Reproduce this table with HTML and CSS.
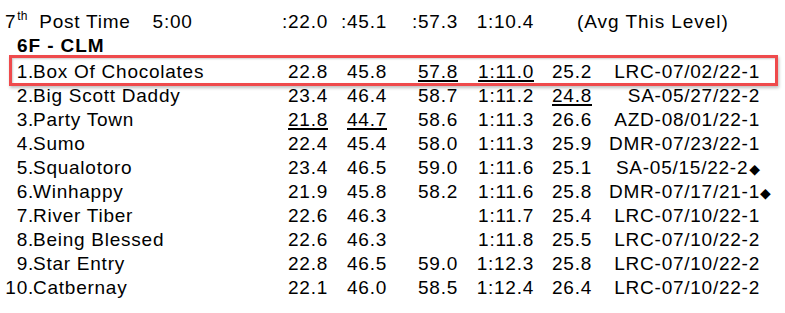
FILE: index.html
```html
<!DOCTYPE html>
<html>
<head>
<meta charset="utf-8">
<link rel="stylesheet" href="styles.css">
</head>
<body>
<div class="sheet">
  <div class="row head">
    <div class="title"><span class="ord">7<sup>th</sup></span><span class="post">Post Time</span><span class="time">5:00</span></div>
    <div class="n">:22.0</div>
    <div class="n">:45.1</div>
    <div class="n">:57.3</div>
    <div class="n">1:10.4</div>
    <div class="avg">(Avg This Level)</div>
  </div>
  <div class="row race">6F - CLM</div>
  <div class="rows">
    <div class="row hl"><div class="num">1.</div><div class="name">Box Of Chocolates</div><div class="n">22.8</div><div class="n">45.8</div><div class="n"><u>57.8</u></div><div class="n"><u>1:11.0</u></div><div class="n">25.2</div><div class="n">LRC-07/02/22-1</div></div>
    <div class="row"><div class="num">2.</div><div class="name">Big Scott Daddy</div><div class="n">23.4</div><div class="n">46.4</div><div class="n">58.7</div><div class="n">1:11.2</div><div class="n"><u>24.8</u></div><div class="n">SA-05/27/22-2</div></div>
    <div class="row"><div class="num">3.</div><div class="name">Party Town</div><div class="n"><u>21.8</u></div><div class="n"><u>44.7</u></div><div class="n">58.6</div><div class="n">1:11.3</div><div class="n">26.6</div><div class="n">AZD-08/01/22-1</div></div>
    <div class="row"><div class="num">4.</div><div class="name">Sumo</div><div class="n">22.4</div><div class="n">45.4</div><div class="n">58.0</div><div class="n">1:11.3</div><div class="n">25.9</div><div class="n">DMR-07/23/22-1</div></div>
    <div class="row"><div class="num">5.</div><div class="name">Squalotoro</div><div class="n">23.4</div><div class="n">46.5</div><div class="n">59.0</div><div class="n">1:11.6</div><div class="n">25.1</div><div class="n">SA-05/15/22-2<span class="dia">◆</span></div></div>
    <div class="row"><div class="num">6.</div><div class="name">Winhappy</div><div class="n">21.9</div><div class="n">45.8</div><div class="n">58.2</div><div class="n">1:11.6</div><div class="n">25.8</div><div class="n">DMR-07/17/21-1</div><div class="mark"><span class="dia">◆</span></div></div>
    <div class="row"><div class="num">7.</div><div class="name">River Tiber</div><div class="n">22.6</div><div class="n">46.3</div><div class="n"></div><div class="n">1:11.7</div><div class="n">25.4</div><div class="n">LRC-07/10/22-1</div></div>
    <div class="row"><div class="num">8.</div><div class="name">Being Blessed</div><div class="n">22.6</div><div class="n">46.3</div><div class="n"></div><div class="n">1:11.8</div><div class="n">25.5</div><div class="n">LRC-07/10/22-2</div></div>
    <div class="row"><div class="num">9.</div><div class="name">Star Entry</div><div class="n">22.8</div><div class="n">46.5</div><div class="n">59.0</div><div class="n">1:12.3</div><div class="n">25.8</div><div class="n">LRC-07/10/22-2</div></div>
    <div class="row"><div class="num">10.</div><div class="name">Catbernay</div><div class="n">22.1</div><div class="n">46.0</div><div class="n">58.5</div><div class="n">1:12.4</div><div class="n">26.4</div><div class="n">LRC-07/10/22-2</div></div>
  </div>
</div>
</body>
</html>
```
FILE: styles.css
```css
html, body {
  margin: 0;
  padding: 0;
  background: #ffffff;
}
body {
  font-family: "Liberation Sans", Arial, sans-serif;
  font-size: 19px;
  letter-spacing: 0.75px;
  color: #000;
  line-height: 24px;
}
.sheet {
  padding-top: 10px;
  width: 785px;
}
.row {
  display: grid;
  grid-template-columns: 33px 247px 47px 59px 71px 76px 58px 168px 26px;
  height: 24px;
  white-space: nowrap;
  position: relative;
}
.rows {
  padding-top: 2px;
}
.num { text-align: right; margin-right: -1px; }
.name { text-align: left; }
.n { text-align: right; margin-right: -1px; }
u {
  text-decoration-thickness: 2px;
  text-underline-offset: 2px;
}
.title {
  grid-column: 1 / 3;
  padding-left: 5px;
}
.ord sup {
  font-size: 12px;
  letter-spacing: 0;
  line-height: 0;
  vertical-align: 8px;
  margin-left: 1px;
}
.post { margin-left: 12px; }
.time { margin-left: 22px; }
.avg {
  grid-column: 7 / 10;
  padding-left: 44px;
  letter-spacing: 0.95px;
}
.race {
  display: block;
  font-weight: bold;
  letter-spacing: 0.9px;
  padding-left: 17px;
}
.hl::after {
  content: "";
  position: absolute;
  left: 9px;
  right: 7px;
  top: -5px;
  bottom: -2px;
  border: 3px solid #ef4a4c;
  box-shadow: 1px 2px 3px rgba(0,0,0,0.25), inset 1px 1px 2px rgba(0,0,0,0.2);
  pointer-events: none;
}
.dia {
  font-family: "DejaVu Sans", sans-serif;
  font-size: 14px;
  letter-spacing: 0;
  margin-left: 1px;
}
.mark { text-align: left; }
```
